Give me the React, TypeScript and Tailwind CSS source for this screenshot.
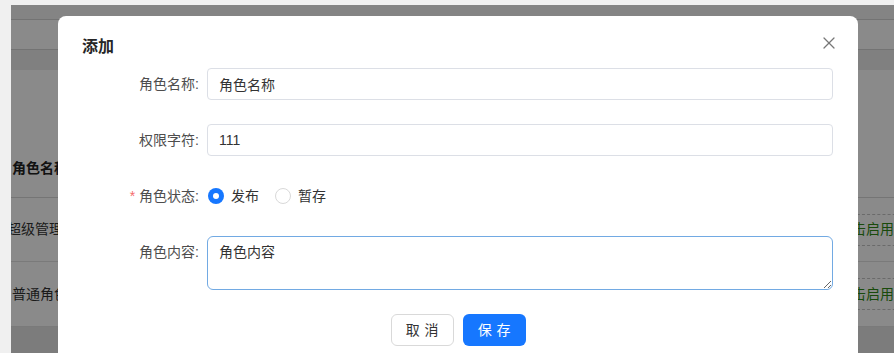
import { X } from "lucide-react";

const font = { fontFamily: '"Liberation Sans", "Noto Sans CJK SC", sans-serif' };

const rows = [
  { name: "超级管理员", action: "点击启用" },
  { name: "普通角色", action: "点击启用" },
];

const Background = () => {
  return (
    <div className="flex flex-col w-full h-full bg-white">
      <div className="h-[14px] bg-[#f4f4f4]" />
      <div className="h-[31px] border-y border-[#d4d4d4] bg-white" />
      <div className="h-[20px] bg-[#ececec]" />
      <div className="h-[70px]" />
      <div className="flex items-center h-[58px] px-[1px] text-[14px] font-bold text-[#222] border-b border-[#d8d8d8]">
        角色名称
      </div>
      {rows.map((r, i) => (
        <div
          key={i}
          className={`flex items-center justify-between ${i === 0 ? "h-[64px]" : "h-[65px]"} border-b border-[#e2e2e2] text-[14px] text-[#333]`}
        >
          <span className={i === 0 ? "-ml-[4px]" : "ml-[1px]"}>{r.name}</span>
          <span className="flex items-center h-[32px] px-3 -mr-[12px] border-y border-dashed border-[#c4c4c4] text-[#2f8a16]">
            {r.action}
          </span>
        </div>
      ))}
      <div className="flex-1 bg-[#e6e6e6]" />
    </div>
  );
};

const Field = ({ label, required, children }: { label: string; required?: boolean; children: React.ReactNode }) => (
  <div className="flex items-start">
    <label className="w-[149px] shrink-0 h-8 flex items-center justify-end pr-[8px] text-[14px] text-[#4d4d4d]">
      {required && <span className="text-[#f56c6c] mr-[4px]">*</span>}
      {label}:
    </label>
    <div className="flex-1">{children}</div>
  </div>
);

const Radio = ({ checked, label }: { checked?: boolean; label: string }) => (
  <label className="flex items-center gap-[7px] cursor-pointer">
    {checked ? (
      <span className="w-4 h-4 rounded-full bg-[#1677ff] flex items-center justify-center">
        <span className="w-[6px] h-[6px] rounded-full bg-white" />
      </span>
    ) : (
      <span className="w-4 h-4 rounded-full border border-[#d9d9d9] bg-white" />
    )}
    <span className="text-[14px] text-[#333]">{label}</span>
  </label>
);

export default function App() {
  return (
    <div className="w-[894px] h-[353px] overflow-hidden bg-[#f0f0f0] pl-[11px] pt-[5px]" style={font}>
      <div className="relative w-full h-[348px] overflow-hidden">
        <Background />
        <div className="absolute inset-0 bg-black/[0.46]" />

        <div className="absolute left-[47px] top-[11px] w-[800px] rounded-lg bg-white pb-6 pr-[25px]">
          <button className="absolute right-[19px] top-[17px] text-[#777]">
            <X size={20} strokeWidth={1.5} />
          </button>
          <h2 className="pl-6 pt-[19px] text-[16px] leading-6 font-semibold text-[#262626]">添加</h2>

          <div className="mt-[9px] flex flex-col gap-6">
            <Field label="角色名称">
              <input
                defaultValue="角色名称"
                className="w-full h-8 px-[11px] rounded-[4px] border border-[#dcdfe6] text-[14px] text-[#333] outline-none"
              />
            </Field>
            <Field label="权限字符">
              <input
                defaultValue="111"
                className="w-full h-8 px-[11px] rounded-[4px] border border-[#dcdfe6] text-[14px] text-[#333] outline-none"
              />
            </Field>
            <Field label="角色状态" required>
              <div className="flex items-center h-8 gap-[16px] pl-[1px]">
                <Radio checked label="发布" />
                <Radio label="暂存" />
              </div>
            </Field>
            <Field label="角色内容">
              <textarea
                defaultValue="角色内容"
                className="block w-full h-[54px] px-[11px] py-[4px] rounded-[6px] border border-[#72aae3] text-[14px] leading-[22px] text-[#333] outline-none"
              />
            </Field>
          </div>

          <div className="mt-6 flex justify-center gap-[9px] pl-[25px]">
            <button className="w-[63px] h-8 rounded-[6px] border border-[#d9d9d9] bg-white text-[14px] text-[#333] tracking-[0.34em] pl-[5px]">
              取消
            </button>
            <button className="w-[63px] h-8 rounded-[6px] bg-[#1677ff] text-[14px] text-white tracking-[0.34em] pl-[5px]">
              保存
            </button>
          </div>
        </div>
      </div>
    </div>
  );
}
